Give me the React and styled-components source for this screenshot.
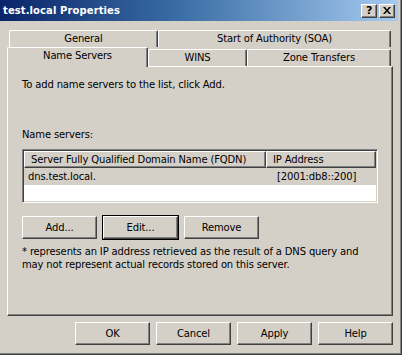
import React from "react";
import styled, { createGlobalStyle } from "styled-components";

const GlobalStyle = createGlobalStyle`
  html, body {
    margin: 0;
    padding: 0;
    background: #d4d0c8;
  }
  body {
    font-family: "DejaVu Sans", Tahoma, sans-serif;
    font-size: 10px;
    letter-spacing: -0.15px;
    color: #000;
  }
`;

const raised = `
  border-top: 1px solid #fff;
  border-left: 1px solid #fff;
  border-right: 1px solid #404040;
  border-bottom: 1px solid #404040;
  box-shadow: inset -1px -1px #808080;
`;

const App = () => {
  return (
    <>
      <GlobalStyle />
      <Window>
        <TitleBar>
          <Title>test.local Properties</Title>
          <CaptionButtons>
            <CaptionButton>?</CaptionButton>
            <CaptionButton>
              <svg width="8" height="7" viewBox="0 0 8 7">
                <path d="M0 0h2l2 2.5L6 0h2L5 3.5 8 7H6L4 4.5 2 7H0l3-3.5z" fill="#000" />
              </svg>
            </CaptionButton>
          </CaptionButtons>
        </TitleBar>

        <Body>
          <TabRow $offset={2}>
            <Tab $width={149}>General</Tab>
            <Tab $width={233}>Start of Authority (SOA)</Tab>
          </TabRow>
          <TabRow $front>
            <Tab $width={141} $active>Name Servers</Tab>
            <Tab $width={99}>WINS</Tab>
            <Tab $width={144}>Zone Transfers</Tab>
          </TabRow>

          <Panel>
            <Intro>To add name servers to the list, click Add.</Intro>
            <Label>Name servers:</Label>
            <ListBox>
              <HeaderRow>
                <HeaderCell $width={242}>Server Fully Qualified Domain Name (FQDN)</HeaderCell>
                <HeaderCell>IP Address</HeaderCell>
              </HeaderRow>
              <ItemRow>
                <ItemCell $width={242}>dns.test.local.</ItemCell>
                <ItemCell $pad={7}>[2001:db8::200]</ItemCell>
              </ItemRow>
            </ListBox>
            <ButtonRow>
              <Button>Add...</Button>
              <Button $focused>Edit...</Button>
              <Button>Remove</Button>
            </ButtonRow>
            <Note>
              * represents an IP address retrieved as the result of a DNS query and
              <br />
              may not represent actual records stored on this server.
            </Note>
          </Panel>

          <DialogButtons>
            <Button>OK</Button>
            <Button>Cancel</Button>
            <Button>Apply</Button>
            <Button>Help</Button>
          </DialogButtons>
        </Body>
      </Window>
    </>
  );
};

const Window = styled.div`
  width: 402px;
  height: 355px;
  box-sizing: border-box;
  background: #d4d0c8;
  border-right: 1px solid #404040;
  border-bottom: 1px solid #404040;
  box-shadow: inset -1px -1px #808080;
  padding-right: 3px;
  display: flex;
  flex-direction: column;
  overflow: hidden;
`;

const TitleBar = styled.div`
  height: 21px;
  display: flex;
  align-items: center;
  justify-content: space-between;
  padding: 0 3px 0 3px;
  background: linear-gradient(to right, #0a246a, #3a6ea5 45%, #a6caf0);
`;

const Title = styled.div`
  color: #fff;
  font-weight: bold;
  font-size: 10px;
  letter-spacing: 0.1px;
`;

const CaptionButtons = styled.div`
  display: flex;
  gap: 2px;
`;

const CaptionButton = styled.div`
  width: 16px;
  height: 14px;
  box-sizing: border-box;
  background: #d4d0c8;
  ${raised}
  display: flex;
  align-items: center;
  justify-content: center;
  font-weight: bold;
  font-size: 11px;
  line-height: 1;
`;

const Body = styled.div`
  padding: 9px 0 0 7px;
  display: flex;
  flex-direction: column;
  width: 386px;
`;

const TabRow = styled.div`
  display: flex;
  align-items: flex-end;
  height: ${(p) => (p.$front ? "19px" : "17px")};
  margin-left: ${(p) => p.$offset || 0}px;
  position: relative;
  z-index: ${(p) => (p.$front ? 2 : 1)};
`;

const Tab = styled.div`
  width: ${(p) => p.$width}px;
  height: ${(p) => (p.$active ? "20px" : "17px")};
  margin-bottom: ${(p) => (p.$active ? "-1px" : "0")};
  box-sizing: border-box;
  background: #d4d0c8;
  border-top: 1px solid #fff;
  border-left: 1px solid #fff;
  border-right: 1px solid #404040;
  box-shadow: inset -1px 0 #808080;
  border-radius: 2px 2px 0 0;
  display: flex;
  justify-content: center;
  padding-top: 2px;
  white-space: nowrap;
`;

const Panel = styled.div`
  height: 250px;
  box-sizing: border-box;
  ${raised}
  padding: 0 14px;
  display: flex;
  flex-direction: column;
  line-height: 13px;
`;

const Intro = styled.div`
  margin-top: 11px;
`;

const Label = styled.div`
  margin-top: 37px;
`;

const ListBox = styled.div`
  margin-top: 8px;
  width: 356px;
  height: 54px;
  box-sizing: border-box;
  background: #fff;
  border-top: 1px solid #808080;
  border-left: 1px solid #808080;
  border-right: 1px solid #fff;
  border-bottom: 1px solid #fff;
  box-shadow: inset 1px 1px #404040, inset -1px -1px #d4d0c8;
  padding: 1px;
  display: flex;
  flex-direction: column;
`;

const HeaderRow = styled.div`
  display: flex;
  height: 17px;
`;

const HeaderCell = styled.div`
  ${(p) => (p.$width ? `width: ${p.$width}px;` : "flex: 1;")}
  box-sizing: border-box;
  background: #d4d0c8;
  ${raised}
  padding-left: 6px;
  line-height: 15px;
  white-space: nowrap;
`;

const ItemRow = styled.div`
  display: flex;
  height: 17px;
  background: #d4d0c8;
  line-height: 17px;
`;

const ItemCell = styled.div`
  ${(p) => (p.$width ? `width: ${p.$width}px;` : "flex: 1;")}
  padding-left: ${(p) => p.$pad || 4}px;
  white-space: nowrap;
`;

const ButtonRow = styled.div`
  display: flex;
  gap: 6px;
  margin-top: 13px;
`;

const Button = styled.div`
  width: 75px;
  height: 23px;
  box-sizing: border-box;
  background: #d4d0c8;
  ${raised}
  ${(p) => p.$focused && `outline: 1px solid #000; outline-offset: 0;`}
  display: flex;
  align-items: center;
  justify-content: center;
`;

const Note = styled.div`
  margin-top: 6px;
  white-space: nowrap;
`;

const DialogButtons = styled.div`
  display: flex;
  justify-content: flex-end;
  gap: 6px;
  margin-top: 6px;
`;

export default App;
